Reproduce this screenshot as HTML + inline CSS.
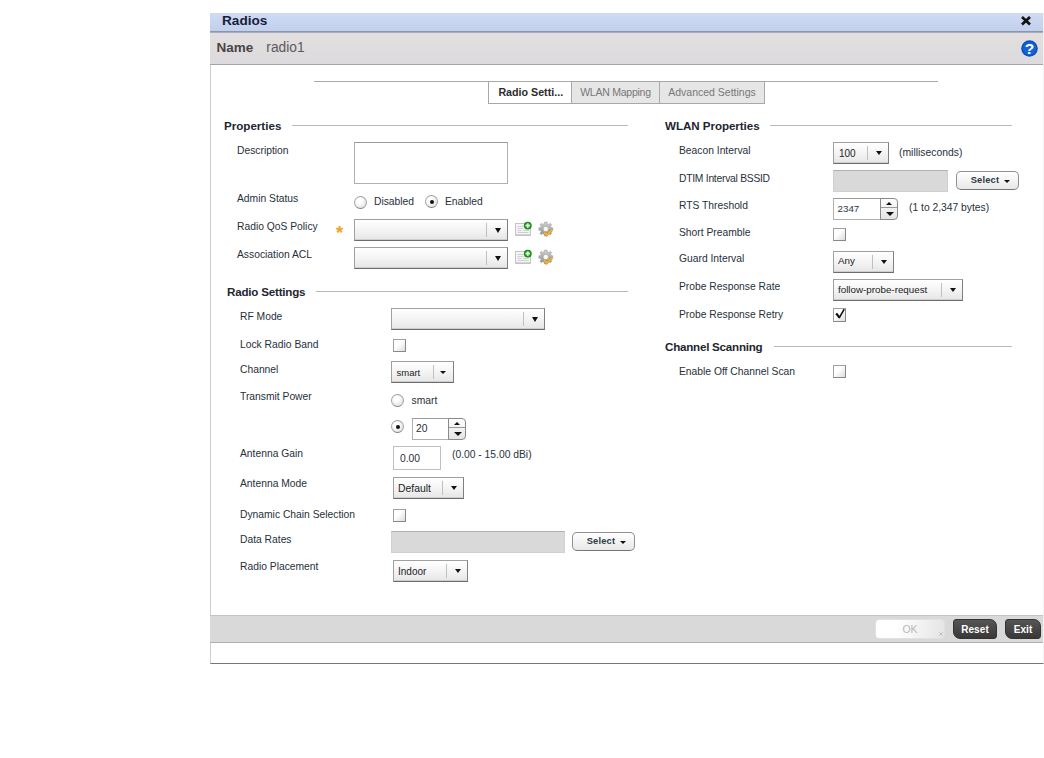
<!DOCTYPE html>
<html><head><meta charset="utf-8">
<style>
*{box-sizing:border-box;margin:0;padding:0}
html,body{width:1044px;height:758px;background:#fff;overflow:hidden}
body{font-family:"Liberation Sans",sans-serif;font-size:11px;color:#222;position:relative}
.abs{position:absolute}
#dlg{left:210px;top:13px;width:834px;height:651px;border-right:1px solid #f2f2f2;border-left:1px solid #cfcfcf;border-bottom:1px solid #777;background:#fff}
#title{left:210px;top:13px;width:833px;height:20px;background:linear-gradient(#d0dbf3,#c0cfed);border-bottom:1px solid #a6acc2;box-shadow:inset 0 -1px 0 #8e94ac}
#title span{position:absolute;left:12px;top:-.5px;font-weight:bold;font-size:13.6px;color:#16203a;line-height:16px}
#namebar{left:210px;top:33px;width:833px;height:32px;background:linear-gradient(#e3dfdf,#dcdadd);border-bottom:1px solid #a4a4a4}
#namebar b{position:absolute;left:6.6px;top:6.8px;font-size:13.5px;color:#4a4446;line-height:16px}
#namebar span{position:absolute;left:56.3px;top:6.8px;font-size:13.8px;color:#5a5a5a;line-height:16px}
.hline{height:1px;background:#b8b8b8}
.tab{top:81px;height:23px;border:1px solid #a8a8a8;background:#e6e6e6;color:#777;font-size:10.5px;line-height:20.6px;text-align:center;white-space:nowrap}
.tab.sel{background:#fff;color:#2c2c2c;text-indent:1.5px;font-weight:bold;font-size:10.7px}
.sec{font-weight:bold;font-size:11.6px;color:#1d2630;line-height:14px;white-space:nowrap}
.lbl{margin-top:1px;font-size:10.3px;color:#27303a;line-height:12px;white-space:nowrap}
.box{border:1px solid #b0b0b0;border-top-color:#9a9a9a;background:#fff}
.gray{background:#d9d9d9;border:1px solid #d0d0d0;border-top-color:#b0b0b0}
.combo{border:1px solid #a0a0a0;border-right-color:#808080;border-bottom:1px solid #6c6c6c;box-shadow:inset 0 -1px 0 rgba(0,0,0,.10);background:linear-gradient(#ffffff,#f4f4f4 50%,#e6e6e6);font-size:9.8px;line-height:20px;color:#222;height:22px}
.combo i{position:absolute;right:20px;top:3px;bottom:3px;width:1px;background:#c0c0c0}
.combo:after{content:"";position:absolute;right:5.9px;top:8.3px;border:3.9px solid transparent;border-top:4.7px solid #111;border-bottom:0}
.combo.big:after{top:8px;border:3.8px solid transparent;border-top:5px solid #111;border-bottom:0}
.combo.sm i{right:19px}
.combo.sm:after{right:7.2px;top:9.4px;border:3.3px solid transparent;border-top:3.7px solid #111;border-bottom:0}
.combo span{position:absolute;left:4px;top:1px}
.cb{width:13px;height:13px;border:1px solid #a0a0a0;border-bottom-color:#888;border-right-color:#888;background:linear-gradient(135deg,#fff 40%,#dcdcdc)}
.radio{width:13px;height:13px;border:1px solid #a4a4a4;border-bottom-color:#808080;border-radius:50%;background:radial-gradient(circle at 40% 35%,#fff 25%,#e2e2e2 75%)}
.radio.on:after{content:"";position:absolute;left:3.5px;top:3.5px;width:4px;height:4px;border-radius:50%;background:#111}
.selbtn{border:1px solid #909090;border-bottom-color:#777;border-radius:5px;background:linear-gradient(#fff,#e8e8e8);font-size:9.3px;font-weight:bold;color:#2c3a44;line-height:17px;width:63px;height:19px;letter-spacing:.2px}
.selbtn span{position:absolute;left:13.7px;top:0}
.selbtn:after{content:"";position:absolute;left:47px;top:7.6px;border:3px solid transparent;border-top:3.2px solid #111;border-bottom:0}
.spin{width:18px;height:22px;border:1px solid #8a8a8a;border-radius:0 4px 4px 0;background:linear-gradient(#fff,#e4e4e4)}
.spin:before{content:"";position:absolute;left:5px;top:2.5px;border:3.5px solid transparent;border-bottom:3px solid #111;border-top:0}
.spin:after{content:"";position:absolute;left:4.5px;bottom:3px;border:4px solid transparent;border-top:4px solid #111;border-bottom:0}
.spin i{position:absolute;left:0;right:0;top:8px;height:1px;background:#999}
#foot{left:210px;top:615px;width:833px;height:28px;background:#d9d9d9;border-top:1px solid #c4c4c4;border-bottom:1px solid #b0b0b0}
.btn{top:619px;height:20px;font-size:11px;font-weight:bold;text-align:center;line-height:19px}
.dark{background:linear-gradient(#555,#383838);color:#fff;border:1px solid #333;border-radius:3px 7px 3px 7px}
</style></head><body>
<div id="dlg" class="abs"></div>
<div id="title" class="abs"><span>Radios</span>
<svg class="abs" style="left:810px;top:1.5px" width="12" height="12" viewBox="0 0 12 12"><path d="M2 2 L10 9.6 M10 2 L2 9.6" stroke="#111" stroke-width="2.7"/></svg></div>
<div id="namebar" class="abs"><b>Name</b><span>radio1</span>
<svg class="abs" style="left:811px;top:6.5px" width="17" height="17" viewBox="0 0 17 17"><circle cx="8.5" cy="8.5" r="8.3" fill="#1463d6"/><circle cx="8.5" cy="8.5" r="7.2" fill="none" stroke="#0d4fb5" stroke-width="1.2"/><text x="8.5" y="14" font-size="15.5" font-weight="bold" fill="#fff" text-anchor="middle" font-family="Liberation Sans, sans-serif">?</text></svg></div>

<div class="abs hline" style="left:314px;top:81px;width:624px;background:#a8a8a8"></div>
<div class="abs tab sel" style="left:488px;width:84px">Radio Setti...</div>
<div class="abs tab" style="left:571px;width:89px;letter-spacing:-.24px">WLAN Mapping</div>
<div class="abs tab" style="left:659px;width:106px">Advanced Settings</div>

<!-- left -->
<div class="abs sec" style="left:224px;top:118.5px">Properties</div>
<div class="abs hline" style="left:292px;top:125px;width:336px"></div>
<div class="abs lbl" style="left:237px;top:144px">Description</div>
<div class="abs box" style="left:354px;top:142px;width:154px;height:42px"></div>
<div class="abs lbl" style="left:237px;top:192px">Admin Status</div>
<div class="abs radio" style="left:354px;top:195.5px"></div>
<div class="abs lbl" style="left:374px;top:195px">Disabled</div>
<div class="abs radio on" style="left:425px;top:195px"></div>
<div class="abs lbl" style="left:445px;top:195px">Enabled</div>
<div class="abs lbl" style="left:237px;top:220px">Radio QoS Policy</div>
<div class="abs" style="left:336px;top:222px;color:#f5a020;font-size:18.5px;line-height:21px;font-weight:bold">*</div>
<div class="abs combo big" style="left:354px;top:219px;width:154px"><i></i></div>
<div class="abs lbl" style="left:237px;top:248px">Association ACL</div>
<div class="abs combo big" style="left:354px;top:247px;width:154px"><i></i></div>

<svg class="abs" style="left:514px;top:220px" width="42" height="18" viewBox="0 0 42 18" id="ic1">
<defs><linearGradient id="gg" x1="0" y1="0" x2="0" y2="1"><stop offset="0" stop-color="#cfcfcf"/><stop offset="1" stop-color="#8e8e8e"/></linearGradient><radialGradient id="gr" cx=".5" cy=".5" r=".5"><stop offset="0" stop-color="#5fd45f"/><stop offset=".6" stop-color="#2aa52a"/><stop offset="1" stop-color="#167a16"/></radialGradient></defs><g id="icons">
<rect x="1.5" y="3.5" width="15" height="11.5" fill="#f4f4f4" stroke="#c4c4c4"/><path d="M1.5 15.3h15" stroke="#b0b0b0" stroke-width=".8"/>
<path d="M3.5 6.5h7M3.5 8.5h6M3.5 10.5h4M9 10.5h6M3.5 12.5h11" stroke="#cfcfd4" stroke-width="1"/>
<circle cx="13.8" cy="5.6" r="3.9" fill="url(#gr)"/>
<path d="M11.6 5.6h4.4M13.8 3.4v4.4" stroke="#e8ffe8" stroke-width="1.5"/>
<g transform="translate(31.8,9)">
<path id="gear" d="M-1.3,-7 L1.3,-7 L1.6,-5.2 L3,-4.6 L4.5,-5.7 L5.9,-4.2 L4.7,-2.8 L5.2,-1.5 L7,-1.2 L7,1.2 L5.2,1.5 L4.7,2.8 L5.9,4.2 L4.5,5.7 L3,4.6 L1.6,5.2 L1.3,7 L-1.3,7 L-1.6,5.2 L-3,4.6 L-4.5,5.7 L-5.9,4.2 L-4.7,2.8 L-5.2,1.5 L-7,1.2 L-7,-1.2 L-5.2,-1.5 L-4.7,-2.8 L-5.9,-4.2 L-4.5,-5.7 L-3,-4.6 L-1.6,-5.2 Z" fill="url(#gg)" stroke="#9a9a9a" stroke-width=".5"/>
<circle cx="0" cy="0" r="2.7" fill="#fafafa" stroke="#9a9a9a" stroke-width=".6"/>
<path d="M-1.5 3.4 L1 6 L6 1" stroke="#c98a20" stroke-width="2.6" fill="none"/><path d="M-1.5 3.4 L1 6 L6 1" stroke="#f4b840" stroke-width="1.6" fill="none"/>
</g>
</g>
</svg>
<svg class="abs" style="left:514px;top:248px" width="42" height="18" viewBox="0 0 42 18"><use href="#icons"/></svg>

<div class="abs sec" style="left:227px;top:284.5px;letter-spacing:-.2px">Radio Settings</div>
<div class="abs hline" style="left:316px;top:291px;width:312px"></div>
<div class="abs lbl" style="left:240px;top:310px">RF Mode</div>
<div class="abs combo big" style="left:391px;top:308px;width:154px"><i></i></div>
<div class="abs lbl" style="left:240px;top:338px">Lock Radio Band</div>
<div class="abs cb" style="left:393px;top:339px"></div>
<div class="abs lbl" style="left:240px;top:363px">Channel</div>
<div class="abs combo sm" style="left:391px;top:361px;width:63px"><i></i><span style="font-size:9.5px;left:4.5px">smart</span></div>
<div class="abs lbl" style="left:240px;top:390px">Transmit Power</div>
<div class="abs radio" style="left:391px;top:394px"></div>
<div class="abs lbl" style="left:411.5px;top:394px">smart</div>
<div class="abs radio on" style="left:391px;top:420px"></div>
<div class="abs box" style="left:412px;top:418px;width:37px;height:22px"><span class="abs lbl" style="left:3px;top:3px">20</span></div>
<div class="abs spin" style="left:448px;top:418px"><i></i></div>
<div class="abs lbl" style="left:240px;top:447px">Antenna Gain</div>
<div class="abs box" style="left:393px;top:446px;width:48px;height:24px;border-color:#c0c0c0"><span class="abs lbl" style="left:6px;top:5px">0.00</span></div>
<div class="abs lbl" style="left:452px;top:448px">(0.00 - 15.00 dBi)</div>
<div class="abs lbl" style="left:240px;top:477px">Antenna Mode</div>
<div class="abs combo" style="left:393px;top:477px;width:71px"><i></i><span style="font-size:10.4px">Default</span></div>
<div class="abs lbl" style="left:240px;top:508px">Dynamic Chain Selection</div>
<div class="abs cb" style="left:393px;top:509px"></div>
<div class="abs lbl" style="left:240px;top:533px">Data Rates</div>
<div class="abs gray" style="left:391px;top:531px;width:174px;height:22px"></div>
<div class="abs selbtn" style="left:572px;top:532px"><span>Select</span></div>
<div class="abs lbl" style="left:240px;top:560px">Radio Placement</div>
<div class="abs combo" style="left:393px;top:560px;width:75px"><i></i><span style="font-size:10px">Indoor</span></div>

<!-- right -->
<div class="abs sec" style="left:665px;top:118.5px;letter-spacing:-.05px">WLAN Properties</div>
<div class="abs hline" style="left:770px;top:125px;width:242px"></div>
<div class="abs lbl" style="left:679px;top:144px">Beacon Interval</div>
<div class="abs combo" style="left:833px;top:142px;width:56px"><i></i><span style="font-size:10px;left:5px">100</span></div>
<div class="abs lbl" style="left:899px;top:145.5px;font-size:10.4px">(milliseconds)</div>
<div class="abs lbl" style="left:679px;top:172px;letter-spacing:-.25px">DTIM Interval BSSID</div>
<div class="abs gray" style="left:833px;top:170px;width:115px;height:22px"></div>
<div class="abs selbtn" style="left:956px;top:171px"><span>Select</span></div>
<div class="abs lbl" style="left:679px;top:199px">RTS Threshold</div>
<div class="abs box" style="left:833px;top:198px;width:48px;height:22px"><span class="abs lbl" style="left:3.5px;top:3px;font-size:9.8px;color:#2a3a48">2347</span></div>
<div class="abs spin" style="left:880px;top:198px"><i></i></div>
<div class="abs lbl" style="left:909px;top:200.5px">(1 to 2,347 bytes)</div>
<div class="abs lbl" style="left:679px;top:226px">Short Preamble</div>
<div class="abs cb" style="left:833px;top:228px"></div>
<div class="abs lbl" style="left:679px;top:252px">Guard Interval</div>
<div class="abs combo" style="left:833px;top:251px;width:61px"><i></i><span style="top:-1px">Any</span></div>
<div class="abs lbl" style="left:679px;top:280px">Probe Response Rate</div>
<div class="abs combo" style="left:833px;top:279px;width:130px"><i></i><span style="top:-.3px">follow-probe-request</span></div>
<div class="abs lbl" style="left:679px;top:308px">Probe Response Retry</div>
<div class="abs cb" style="left:833px;top:308px;height:14px"><svg class="abs" style="left:0;top:-1px" width="12" height="12" viewBox="0 0 12 12"><path d="M2.2 5.4 L5.5 9.6" stroke="#111" stroke-width="2.3" fill="none"/><path d="M5.1 10.2 L10.2 1.2" stroke="#111" stroke-width="1.6" fill="none"/></svg></div>
<div class="abs sec" style="left:665px;top:339.5px;letter-spacing:-.23px">Channel Scanning</div>
<div class="abs hline" style="left:774px;top:346px;width:238px"></div>
<div class="abs lbl" style="left:679px;top:365px">Enable Off Channel Scan</div>
<div class="abs cb" style="left:833px;top:365px"></div>

<div id="foot" class="abs"></div>
<div class="abs btn" style="left:875px;width:70px;background:linear-gradient(100deg,#fff 30%,#e4e4e4);color:#b8b8b8;border:1px solid #e0e0e0;border-radius:4px;font-weight:normal;font-size:10.5px">OK
<svg class="abs" style="left:63px;top:12px" width="4" height="4" viewBox="0 0 5 5"><path d="M.5 .5L4.5 4.5M4.5 .5L.5 4.5" stroke="#aaa" stroke-width=".8"/></svg></div>
<div class="abs btn dark" style="left:953px;width:44px;font-size:10px;letter-spacing:.1px">Reset</div>
<div class="abs btn dark" style="left:1005px;width:36px;font-size:10px;letter-spacing:.1px">Exit</div>
</body></html>
